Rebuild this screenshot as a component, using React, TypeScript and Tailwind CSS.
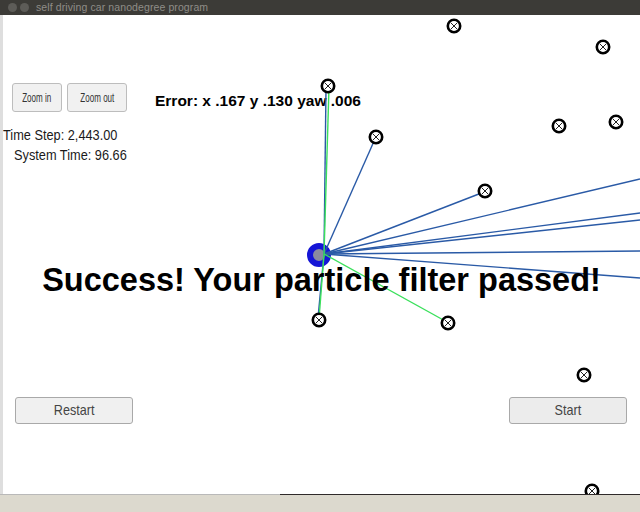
import React from 'react';

type Pt = [number, number];

// landmarks on the map (page coords)
const landmarks: Pt[] = [
  [454, 26], [603, 47], [328, 86], [376, 137], [559, 126], [616, 122],
  [485, 191], [319, 320], [448, 323], [584, 375], [592, 491],
];

const origin: Pt = [324, 254];

const blueRays: Pt[] = [
  [326, 88], [375, 139], [484, 192], [640, 179], [640, 213],
  [640, 220], [640, 251], [640, 278], [318, 318],
];

const greenRays: Pt[] = [
  [329, 87], [319, 319], [447, 322],
];

function Landmark({ x, y }: { x: number; y: number }) {
  return (
    <g>
      <circle cx={x} cy={y} r={6.2} fill="white" stroke="black" strokeWidth={2.6} />
      <line x1={x - 3} y1={y - 3} x2={x + 3} y2={y + 3} stroke="#222" strokeWidth={1} />
      <line x1={x + 3} y1={y - 3} x2={x - 3} y2={y + 3} stroke="#222" strokeWidth={1} />
    </g>
  );
}

function Scene() {
  return (
    <svg
      className="absolute inset-0 pointer-events-none"
      width={640}
      height={479}
      viewBox="0 15 640 479"
    >
      <circle cx={319} cy={255} r={9} fill="#8a8aa0" stroke="#1515d6" strokeWidth={6} />
      {blueRays.map(([x, y], i) => (
        <line key={'b' + i} x1={origin[0]} y1={origin[1]} x2={x} y2={y} stroke="#2a5aa6" strokeWidth={1.4} />
      ))}
      {greenRays.map(([x, y], i) => (
        <line key={'g' + i} x1={origin[0]} y1={origin[1]} x2={x} y2={y} stroke="#3be05c" strokeWidth={1.4} />
      ))}
      {landmarks.map(([x, y], i) => (
        <Landmark key={i} x={x} y={y} />
      ))}
    </svg>
  );
}

export default function App() {
  return (
    <div className="w-[640px] h-[512px] flex flex-col overflow-hidden bg-white font-['Liberation_Sans',Arial,sans-serif]">
      {/* window title bar */}
      <div className="h-[15px] bg-[#3c3b37] flex items-center">
        <div className="ml-[8px] w-[9px] h-[9px] rounded-full bg-[#5d5c58]" />
        <div className="ml-[3px] w-[9px] h-[9px] rounded-full bg-[#5d5c58]" />
        <span className="ml-[7px] text-[10.5px] leading-none tracking-[0.1px] text-[#8f8d88] whitespace-nowrap">
          self driving car nanodegree program
        </span>
      </div>

      {/* simulator area */}
      <div className="relative flex h-[479px] overflow-hidden">
        <div className="w-[3px] bg-[#dedede]" />
        <div className="flex-1 flex flex-col">
          <div className="mt-[68px] flex items-start">
            <button className="ml-[9px] w-[50px] h-[29px] rounded-[3px] border border-[#bdbdbd] bg-[#f1f1f1] text-[12px] text-[#333] flex items-center justify-center">
              <span className="inline-block scale-x-67 whitespace-nowrap">Zoom in</span>
            </button>
            <button className="ml-[5px] w-[60px] h-[29px] rounded-[3px] border border-[#bdbdbd] bg-[#f1f1f1] text-[12px] text-[#333] flex items-center justify-center">
              <span className="inline-block scale-x-67 whitespace-nowrap">Zoom out</span>
            </button>
            <div className="ml-[28px] mt-[10px] text-[15.5px] leading-[16px] font-bold text-black whitespace-nowrap">
              Error: x .167 y .130 yaw .006
            </div>
          </div>

          <div className="mt-[15px] h-[16px] text-[14.5px] leading-[16px] text-[#1a1a1a]">
            <span className="inline-block origin-left scale-x-88 whitespace-nowrap">Time Step: 2,443.00</span>
          </div>
          <div className="mt-[4px] ml-[11px] h-[16px] text-[14.5px] leading-[16px] text-[#1a1a1a]">
            <span className="inline-block origin-left scale-x-88 whitespace-nowrap">System Time: 96.66</span>
          </div>

          <div className="relative z-10 mt-[101px] h-[33px] text-[32.5px] leading-[33px] font-bold text-black text-center whitespace-nowrap">
            Success! Your particle filter passed!
          </div>

          <div className="mt-[100px] flex justify-between pl-[12px] pr-[13px]">
            <button className="w-[118px] h-[27px] rounded-[3px] border border-[#a9a9a9] bg-[#f0f0f0] text-[15px] text-[#444] flex items-center justify-center">
              <span className="inline-block scale-x-84">Restart</span>
            </button>
            <button className="w-[118px] h-[27px] rounded-[3px] border border-[#a9a9a9] bg-[#ececec] text-[15px] text-[#444] flex items-center justify-center">
              <span className="inline-block scale-x-84">Start</span>
            </button>
          </div>
        </div>
        <Scene />
      </div>

      {/* bottom edge */}
      <div className="h-px flex">
        <div className="w-[280px] bg-[#b9b9b9]" />
        <div className="flex-1 bg-[#2f2a2a]" />
      </div>
      <div className="h-[17px] bg-[#dcd9ce]" />
    </div>
  );
}
